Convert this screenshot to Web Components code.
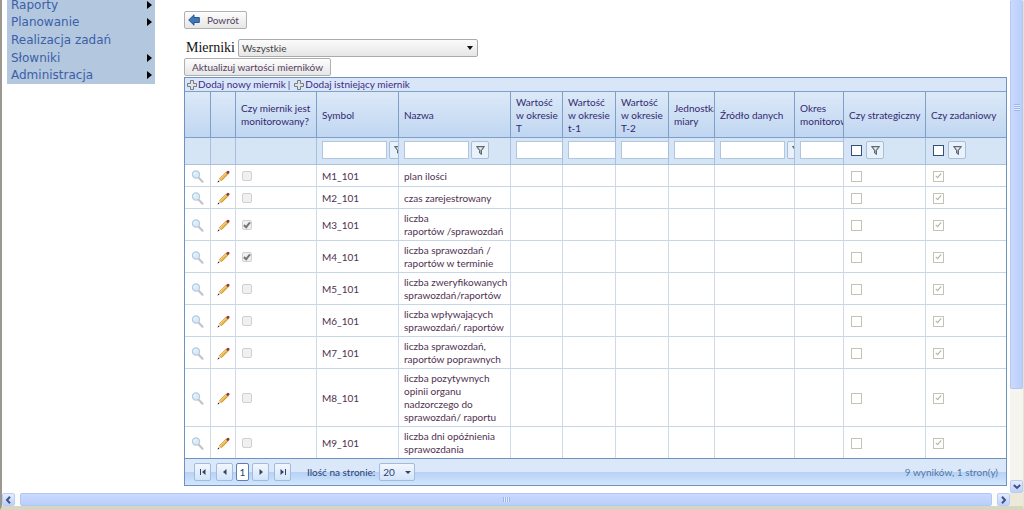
<!DOCTYPE html>
<html lang="pl">
<head>
<meta charset="utf-8">
<title>Mierniki</title>
<style>
    body {
        margin: 0;
        background: #fff;
        font-family: Lato, "Noto Sans", sans-serif;
        font-size: 10px;
        line-height: 13px;
        color: #4f3150;
    }
</style>
</head>
<body>
<app-window>
    <side-menu slot="menu">
        <menu-entry arrow>Raporty</menu-entry>
        <menu-entry arrow>Planowanie</menu-entry>
        <menu-entry>Realizacja zadań</menu-entry>
        <menu-entry arrow>Słowniki</menu-entry>
        <menu-entry arrow>Administracja</menu-entry>
    </side-menu>
    <measure-page></measure-page>
</app-window>

<script>
const icons = {
    back: '<svg width="12" height="12" viewBox="0 0 12 12"><path d="M0.7 6 6 0.8V3.5h5.3v5H6v2.7z" fill="#3f78b8" stroke="#28578f"/></svg>',
    plus: '<svg width="10" height="10" viewBox="0 0 10 10"><path d="M3.5.5h3v3h3v3h-3v3h-3v-3h-3v-3h3z" fill="#dfe3e8" stroke="#777c84"/></svg>',
    lens: '<svg width="13" height="13" viewBox="0 0 13 13"><path d="m7.500 7.500 4 4.200" stroke="#c3c3c9" stroke-width="2.200" stroke-linecap="round"/><circle cx="5" cy="4.500" r="3.600" fill="#d9ebf8" stroke="#b3cbdf" stroke-width="1.200"/><path d="M3 4.500A2 2 0 0 1 5 2.500" fill="none" stroke="#fff"/></svg>',
    pencil: '<svg width="13" height="13" viewBox="0 0 13 13"><path d="m2.600 8.600 6.200-6.200 2 2-6.200 6.200z" fill="#f0b43c" stroke="#b9781e" stroke-width=".7"/><path d="m3.400 8.800 6-6" stroke="#ffe08a" stroke-width=".9"/><path d="m.8 12.200 1.700-3.700 2 2z" fill="#ecd0a0"/><path d="m.5 12.500.8-1.900 1.100 1.100z" fill="#222"/><path d="m9 2.300 1.300-1.400q1.200-.4 1.900.3.600.8.100 1.700l-1.400 1.300z" fill="#8b3737"/></svg>',
    funnel: '<svg width="9" height="9" viewBox="0 0 9 9"><path d="M.5.5h8L5.500 4.500v4L3.500 7V4.500z" fill="#9aa3ad" stroke="#444c58" stroke-width=".8"/><path d="M2.500 1.500h4L4.500 4z" fill="#f2f5f8"/></svg>',
    first: '<svg width="8" height="8" viewBox="0 0 8 8"><path d="M1 1h1v6H1zM6.500 1v6L3 4z" fill="#34445f"/></svg>',
    prev: '<svg width="8" height="8" viewBox="0 0 8 8"><path d="M5.500 1v6L2 4z" fill="#34445f"/></svg>',
    next: '<svg width="8" height="8" viewBox="0 0 8 8"><path d="M2.500 1v6L6 4z" fill="#34445f"/></svg>',
    last: '<svg width="8" height="8" viewBox="0 0 8 8"><path d="M7 1H6v6h1zM1.500 1v6L5 4z" fill="#34445f"/></svg>',
    left: '<svg width="7" height="8" viewBox="0 0 7 8"><path d="M5 .8 2 4l3 3.200" fill="none" stroke="#3f5480" stroke-width="2"/></svg>',
    right: '<svg width="7" height="8" viewBox="0 0 7 8"><path d="m2 .8 3 3.200-3 3.200" fill="none" stroke="#3f5480" stroke-width="2"/></svg>',
    down: '<svg width="8" height="7" viewBox="0 0 8 7"><path d="M.8 2 4 5l3.200-3" fill="none" stroke="#3f5480" stroke-width="2"/></svg>'
};

class AppIcon extends HTMLElement {
    constructor() {
        super();
        this.attachShadow({ mode: 'open' });
    }

    connectedCallback() {
        this.shadowRoot.innerHTML = `
            <style>
                :host { display: inline-block; vertical-align: middle; line-height: 0; }
                svg { display: block; }
            </style>
            ${icons[this.getAttribute('name')]}
        `;
    }
}

class ScrollBar extends HTMLElement {
    constructor() {
        super();
        this.attachShadow({ mode: 'open' });
    }

    connectedCallback() {
        const vertical = this.hasAttribute('vertical');
        this.shadowRoot.innerHTML = `
            <style>
                :host {
                    display: flex;
                    gap: 5px;
                    background: #fbfbf9;
                }
                :host([vertical]) { flex-direction: column; background: #f5f4ee; }
                .arrow {
                    flex: none;
                    display: flex;
                    align-items: center;
                    justify-content: center;
                    width: 13px;
                    height: 13px;
                    padding: 0;
                    border: 1px solid #bccdf5;
                    border-radius: 2px;
                    background: linear-gradient(#e4edff, #bed0fb);
                }
                .thumb {
                    flex: 1;
                    display: flex;
                    align-items: center;
                    justify-content: center;
                    border: 1px solid #b3c7f4;
                    border-radius: 2px;
                    background: linear-gradient(#cbd9ff, #b9cffb);
                }
                :host([vertical]) .thumb {
                    flex: none;
                    height: 79%;
                    border-top: 0;
                    box-sizing: border-box;
                    background: linear-gradient(90deg, #cbd9ff, #b9cffb);
                }
                .space { flex: 1; }
                .grip {
                    width: 7px;
                    height: 5px;
                    background: repeating-linear-gradient(90deg, #9db5e8 0 1px, #e4edff 1px 2px);
                }
                :host([vertical]) .grip {
                    margin-bottom: 174px;
                    width: 6px;
                    height: 7px;
                    background: repeating-linear-gradient(#9db5e8 0 1px, #e4edff 1px 2px);
                }
            </style>
            ${vertical ? '' : '<button class="arrow" aria-label="W lewo"><app-icon name="left"></app-icon></button>'}
            <div class="thumb"><div class="grip"></div></div>
            ${vertical ? '<div class="space"></div>' : ''}
            <button class="arrow" aria-label="Dalej"><app-icon name="${vertical ? 'down' : 'right'}"></app-icon></button>
        `;
    }
}

class AppWindow extends HTMLElement {
    constructor() {
        super();
        this.attachShadow({ mode: 'open' });
    }

    connectedCallback() {
        this.shadowRoot.innerHTML = `
            <style>
                :host {
                    display: grid;
                    grid-template-columns: minmax(0, 1fr) 13px;
                    grid-template-rows: minmax(0, 1fr) 13px;
                    box-sizing: border-box;
                    height: 100vh;
                    overflow: hidden;
                    border-left: 2px solid #9b998f;
                    border-right: 1px solid #e6e3d6;
                    border-bottom: 4px solid #d9d5c3;
                }
                main {
                    display: grid;
                    grid-template-columns: 148px minmax(0, 1fr);
                    column-gap: 29px;
                    align-items: start;
                    padding: 0 3px 0 5px;
                    overflow: hidden;
                }
                .corner { background: #ece9d8; }
            </style>
            <main><slot name="menu"></slot><slot></slot></main>
            <scroll-bar vertical></scroll-bar>
            <scroll-bar></scroll-bar>
            <div class="corner"></div>
        `;
    }
}

class SideMenu extends HTMLElement {
    constructor() {
        super();
        this.attachShadow({ mode: 'open' });
        this.shadowRoot.innerHTML = `
            <style>
                :host {
                    display: block;
                    margin-top: -4px;
                    background: #b3c7df;
                }
                nav { display: flex; flex-direction: column; height: 88px; }
            </style>
            <nav><slot></slot></nav>
        `;
    }
}

class MenuEntry extends HTMLElement {
    constructor() {
        super();
        this.attachShadow({ mode: 'open' });
        this.shadowRoot.innerHTML = `
            <style>
                :host { display: flex; flex: 1; }
                a {
                    flex: 1;
                    display: flex;
                    align-items: center;
                    justify-content: space-between;
                    padding: 0 3px 0 4px;
                    color: #3c5fa8;
                    font: 12px/16px Verdana, "DejaVu Sans", sans-serif;
                    text-decoration: none;
                }
                .arrow { display: none; }
                :host([arrow]) .arrow {
                    display: block;
                    border: solid transparent;
                    border-width: 4px 0 4px 5px;
                    border-left-color: #000;
                }
            </style>
            <a href="#"><slot></slot><span class="arrow"></span></a>
        `;
    }
}

class PushButton extends HTMLElement {
    constructor() {
        super();
        this.attachShadow({ mode: 'open' });
        this.shadowRoot.innerHTML = `
            <style>
                :host { display: block; }
                button {
                    display: flex;
                    align-items: center;
                    gap: 7px;
                    height: 18px;
                    padding: 0 7px;
                    border: 1px solid #b0b0b0;
                    border-radius: 2px;
                    background: linear-gradient(#fdfdfd, #e6e6e6);
                    font: inherit;
                    color: #55405c;
                    white-space: nowrap;
                }
                :host([compact]) button { padding: 0 7px 0 3px; }
            </style>
            <button><slot></slot></button>
        `;
    }
}

class MeasurePage extends HTMLElement {
    constructor() {
        super();
        this.attachShadow({ mode: 'open' });
    }

    connectedCallback() {
        this.shadowRoot.innerHTML = `
            <style>
                :host {
                    display: flex;
                    flex-direction: column;
                    align-items: flex-start;
                    padding-top: 11px;
                }
                .filter {
                    display: flex;
                    align-items: center;
                    gap: 3px;
                    margin-top: 9px;
                    padding-left: 2px;
                }
                .filter label { font: 14px/20px "Liberation Serif", serif; color: #111; }
                .select {
                    display: grid;
                    grid-template-columns: 1fr 10px;
                    align-items: center;
                    width: 240px;
                    height: 18px;
                    box-sizing: border-box;
                    border: 1px solid #aaa;
                    border-radius: 2px;
                    background: linear-gradient(#fbfbfb, #e6e6e6);
                }
                select {
                    grid-area: 1 / 1 / 2 / 3;
                    height: 16px;
                    padding: 0 3px;
                    border: 0;
                    background: none;
                    appearance: none;
                    font: inherit;
                    color: #444;
                }
                .select::after {
                    content: "";
                    grid-area: 1 / 2;
                    width: 0;
                    border: solid transparent;
                    border-width: 4px 3px 0;
                    border-top-color: #111;
                }
                push-button:nth-of-type(2) { margin-bottom: 1px; }
                measure-grid { align-self: stretch; }
            </style>
            <push-button compact><app-icon name="back"></app-icon>Powrót</push-button>
            <div class="filter">
                <label for="kind">Mierniki</label>
                <span class="select"><select id="kind"><option>Wszystkie</option></select></span>
            </div>
            <push-button>Aktualizuj wartości mierników</push-button>
            <measure-grid></measure-grid>
        `;
    }
}

class MeasureGrid extends HTMLElement {
    constructor() {
        super();
        this.attachShadow({ mode: 'open' });
    }

    get columns() {
        return [
            { width: 26 },
            { width: 25 },
            { width: 81, title: 'Czy miernik jest monitorowany?' },
            { width: 82, title: 'Symbol', filter: 'text' },
            { width: 112, title: 'Nazwa', filter: 'text' },
            { width: 52, title: 'Wartość<br>w okresie<br>T', filter: 'text' },
            { width: 53, title: 'Wartość<br>w okresie<br>t-1', filter: 'text' },
            { width: 53, title: 'Wartość<br>w okresie<br>T-2', filter: 'text' },
            { width: 46, title: 'Jednostka miary', filter: 'text' },
            { width: 80, title: 'Źródło danych', filter: 'text' },
            { width: 49, title: 'Okres monitorowania', filter: 'text' },
            { width: 82, title: 'Czy strategiczny', filter: 'check' },
            { width: 80, title: 'Czy zadaniowy', filter: 'check' }
        ];
    }

    get rows() {
        return [
            { symbol: 'M1_101', name: 'plan ilości' },
            { symbol: 'M2_101', name: 'czas zarejestrowany' },
            { symbol: 'M3_101', name: 'liczba<br>raportów /sprawozdań', monitored: true },
            { symbol: 'M4_101', name: 'liczba sprawozdań /<br>raportów w terminie', monitored: true },
            { symbol: 'M5_101', name: 'liczba zweryfikowanych<br>sprawozdań/raportów' },
            { symbol: 'M6_101', name: 'liczba wpływających<br>sprawozdań/ raportów' },
            { symbol: 'M7_101', name: 'liczba sprawozdań,<br>raportów poprawnych' },
            { symbol: 'M8_101', name: 'liczba pozytywnych<br>opinii organu<br>nadzorczego do<br>sprawozdań/ raportu' },
            { symbol: 'M9_101', name: 'liczba dni opóźnienia<br>sprawozdania' }
        ];
    }

    renderFilter(column) {
        if (!column.filter) return '<td></td>';
        const label = column.title.replace(/<br>/g, ' ');
        const field = column.filter === 'text'
            ? `<input type="text" aria-label="${label}">`
            : `<input type="checkbox" aria-label="${label}">`;
        return `<td><div class="field ${column.filter}">${field}<button aria-label="Filtruj"><app-icon name="funnel"></app-icon></button></div></td>`;
    }

    renderRow(row) {
        return `
            <tr>
                <td class="icon"><a href="#" aria-label="Podgląd"><app-icon name="lens"></app-icon></a></td>
                <td class="icon"><a href="#" aria-label="Edytuj"><app-icon name="pencil"></app-icon></a></td>
                <td><input class="soft" type="checkbox" aria-label="Monitorowany ${row.symbol}" disabled ${row.monitored ? 'checked' : ''}></td>
                <td>${row.symbol}</td>
                <td class="name">${row.name}</td>
                <td></td><td></td><td></td><td></td><td></td><td></td>
                <td><input type="checkbox" aria-label="Strategiczny ${row.symbol}" disabled></td>
                <td><input type="checkbox" aria-label="Zadaniowy ${row.symbol}" disabled checked></td>
            </tr>`;
    }

    connectedCallback() {
        this.shadowRoot.innerHTML = `
            <style>
                :host {
                    display: block;
                    border: 1px solid #6f93bf;
                }
                .toolbar {
                    display: flex;
                    align-items: center;
                    height: 13px;
                    padding-left: 2px;
                    background: #d8e6f7;
                    color: #3d2a86;
                }
                .toolbar a {
                    display: flex;
                    align-items: center;
                    gap: 1px;
                    color: inherit;
                    text-decoration: none;
                }
                .toolbar span { margin: 0 4px 0 2px; }
                table {
                    width: 100%;
                    table-layout: fixed;
                    border-collapse: separate;
                    border-spacing: 0;
                }
                th, td {
                    box-sizing: border-box;
                    padding: 3px 0 2px 5px;
                    border-right: 1px solid #cfdae9;
                    border-bottom: 1px solid #c5d7e5;
                    overflow: hidden;
                    text-align: left;
                    vertical-align: middle;
                }
                th:last-child, td:last-child { border-right: 0; }
                th {
                    height: 47px;
                    border-top: 1px solid #7d9fc8;
                    border-color: #7d9fc8;
                    background: linear-gradient(#dce9f8, #c0d6f1);
                    color: #33286f;
                    font-weight: normal;
                }
                .filters td {
                    height: 27px;
                    padding: 2px 0 4px 5px;
                    border-right-color: #a9c0dc;
                    border-bottom-color: #a9c3de;
                    background: #d6e5f5;
                }
                tbody td { height: 22px; }
                tbody tr:last-child td { border-bottom: 0; }
                .name { white-space: nowrap; }
                td.icon { padding-left: 0; text-align: center; }
                .field {
                    display: flex;
                    align-items: center;
                    gap: 2px;
                }
                .field.check { gap: 4px; padding-left: 2px; }
                .field button {
                    flex: none;
                    display: flex;
                    align-items: center;
                    justify-content: center;
                    width: 18px;
                    height: 18px;
                    padding: 0;
                    border: 1px solid #a7bfda;
                    border-radius: 2px;
                    background: #e9f2fb;
                }
                input[type="text"] {
                    flex: none;
                    box-sizing: border-box;
                    width: 65px;
                    height: 18px;
                    padding: 0 3px;
                    border: 1px solid #b0c7df;
                    background: #fff;
                    font: inherit;
                }
                input[type="checkbox"] {
                    appearance: none;
                    display: flex;
                    justify-content: center;
                    box-sizing: border-box;
                    width: 11px;
                    height: 11px;
                    margin: 0;
                    border: 1px solid #31517b;
                    background: #fff;
                }
                tbody input[type="checkbox"] { margin-left: 2px; border-color: #c4c3b8; }
                tbody input[type="checkbox"].soft {
                    width: 10px;
                    height: 10px;
                    margin-left: 1px;
                    border-color: #d0d0d0;
                    border-radius: 2px;
                    background: #f0f0f0;
                }
                input:checked::before {
                    content: "";
                    width: 2px;
                    height: 5px;
                    border: solid #b0aea0;
                    border-width: 0 1px 1px 0;
                    transform: rotate(40deg);
                }
                input.soft:checked::before { border-color: #777; border-width: 0 2px 2px 0; }
            </style>
            <div class="toolbar">
                <a href="#"><app-icon name="plus"></app-icon>Dodaj nowy miernik</a><span>|</span>
                <a href="#"><app-icon name="plus"></app-icon>Dodaj istniejący miernik</a>
            </div>
            <table>
                <colgroup>${this.columns.map(c => `<col style="width: ${c.width}px">`).join('')}</colgroup>
                <thead>
                    <tr>${this.columns.map(c => `<th>${c.title || ''}</th>`).join('')}</tr>
                    <tr class="filters">${this.columns.map(c => this.renderFilter(c)).join('')}</tr>
                </thead>
                <tbody>${this.rows.map(r => this.renderRow(r)).join('')}</tbody>
            </table>
            <grid-pager></grid-pager>
        `;
    }
}

class GridPager extends HTMLElement {
    constructor() {
        super();
        this.attachShadow({ mode: 'open' });
    }

    connectedCallback() {
        this.shadowRoot.innerHTML = `
            <style>
                :host {
                    display: flex;
                    align-items: center;
                    height: 26px;
                    padding: 0 8px 0 9px;
                    border-top: 1px solid #6f93bf;
                    background: linear-gradient(#dbe8fa 0 50%, #b6d2f6 50%, #d3e5fb);
                    color: #2a3f70;
                }
                .pages { display: flex; gap: 3px; }
                button, select {
                    box-sizing: border-box;
                    height: 18px;
                    padding: 0;
                    border: 1px solid #a3bbdc;
                    border-radius: 2px;
                    background: linear-gradient(#f2f7fe, #d3e4fa);
                    font: inherit;
                    color: inherit;
                }
                button {
                    display: flex;
                    align-items: center;
                    justify-content: center;
                    width: 17px;
                }
                button.current { width: 13px; border-color: #5c7fb5; background: #fff; }
                .edge-first { margin-right: 2px; }
                .edge-last { margin-left: 2px; }
                label { margin: 0 4px 0 16px; }
                .size { display: grid; align-items: center; }
                select { grid-area: 1 / 1; width: 36px; padding: 0 3px; appearance: none; }
                .size::after {
                    content: "";
                    grid-area: 1 / 1;
                    justify-self: end;
                    margin-right: 4px;
                    border: solid transparent;
                    border-width: 3px 3px 0;
                    border-top-color: #34445f;
                }
                .total { margin-left: auto; color: #5576a5; }
            </style>
            <div class="pages">
                <button class="edge-first" aria-label="Pierwsza"><app-icon name="first"></app-icon></button>
                <button aria-label="Poprzednia"><app-icon name="prev"></app-icon></button>
                <button class="current">1</button>
                <button aria-label="Następna"><app-icon name="next"></app-icon></button>
                <button class="edge-last" aria-label="Ostatnia"><app-icon name="last"></app-icon></button>
            </div>
            <label for="size">Ilość na stronie:</label>
            <span class="size"><select id="size"><option>20</option></select></span>
            <span class="total">9 wyników, 1 stron(y)</span>
        `;
    }
}

customElements.define('app-icon', AppIcon);
customElements.define('scroll-bar', ScrollBar);
customElements.define('app-window', AppWindow);
customElements.define('side-menu', SideMenu);
customElements.define('menu-entry', MenuEntry);
customElements.define('push-button', PushButton);
customElements.define('measure-page', MeasurePage);
customElements.define('measure-grid', MeasureGrid);
customElements.define('grid-pager', GridPager);
</script>
</body>
</html>
